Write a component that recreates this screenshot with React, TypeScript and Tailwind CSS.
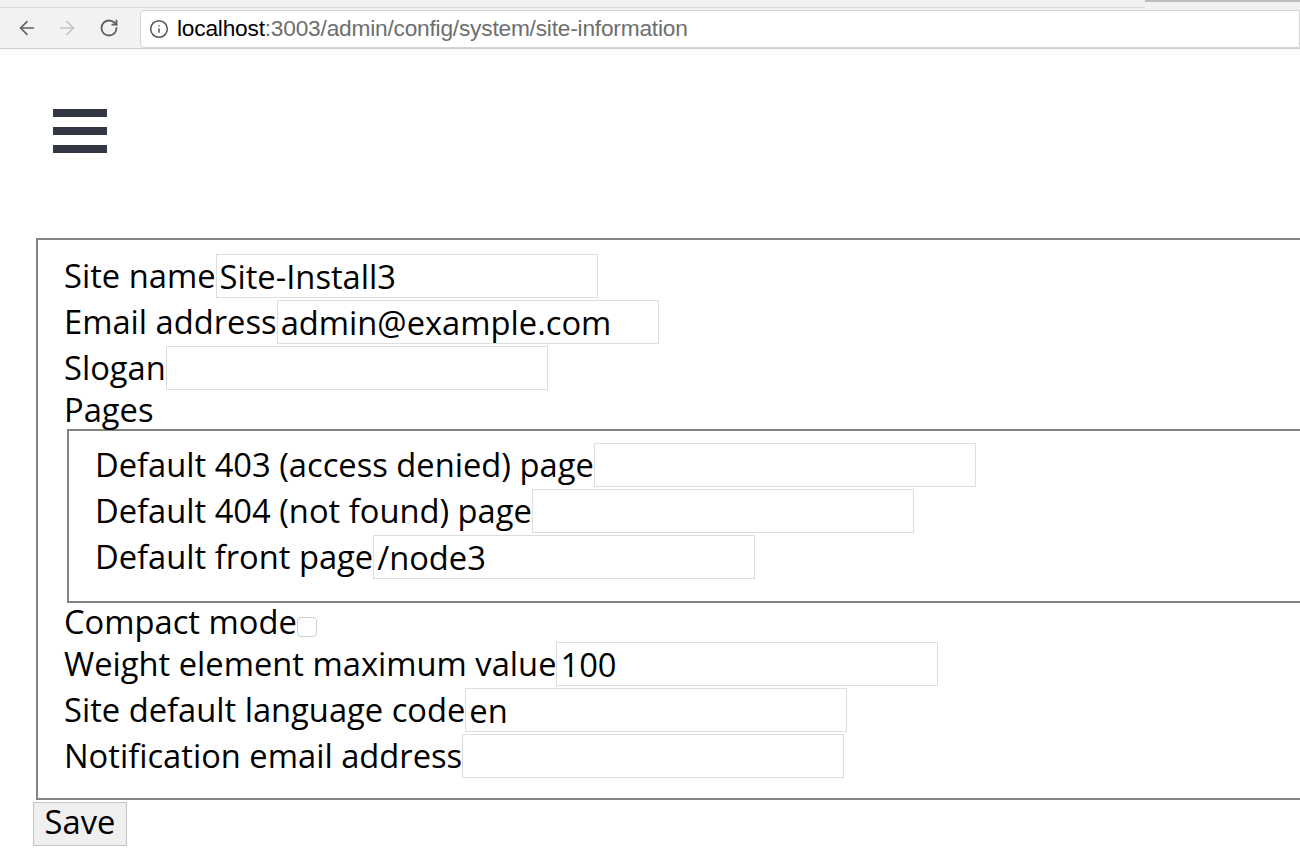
import React from 'react';
import { ArrowLeft, ArrowRight, RotateCw, Info } from 'lucide-react';

const Field: React.FC<{ label: string; value?: string }> = ({ label, value = '' }) => (
  <div className="flex items-center h-[46px] whitespace-nowrap">
    <label>{label}</label>
    <input
      type="text"
      defaultValue={value}
      className="w-[382px] h-[44px] border border-[#dedede] px-[3px] text-[32.7px] text-black outline-none bg-white"
    />
  </div>
);

const BrowserBar: React.FC = () => (
  <div className="w-full bg-[#f2f2f2]">
    <div className="h-[8px] flex">
      <div className="flex-1 border-b border-[#d9d9d9]" />
      <div className="w-[155px] border-t-2 border-[#bdbdbd]" />
    </div>
    <div className="h-[41px] flex items-center border-b border-[#cfcfcf]">
      <div className="flex items-center w-[140px] pl-[16px] gap-[18px]">
        <ArrowLeft className="w-[22px] h-[22px] text-[#5f5f5f]" strokeWidth={1.8} />
        <ArrowRight className="w-[22px] h-[22px] text-[#c4c4c4]" strokeWidth={1.8} />
        <RotateCw className="w-[20px] h-[20px] text-[#5f5f5f] ml-[3px]" strokeWidth={2.2} />
      </div>
      <div className="flex-1 h-[38px] mt-[1px] bg-white border border-[#d4d4d4] rounded-l-[4px] flex items-center pl-[8px] gap-[8px]">
        <Info className="w-[20px] h-[20px] text-[#555]" strokeWidth={1.8} />
        <span className="text-[22.7px] font-['Liberation_Sans',Arial,sans-serif] tracking-[-0.2px]">
          <span className="text-black">localhost</span>
          <span className="text-[#6e6e6e]">:3003/admin/config/system/site-information</span>
        </span>
      </div>
    </div>
    <div className="h-[6px] bg-[#fbfbfb]" />
  </div>
);

export default function App() {
  return (
    <div className="w-[1300px] h-[868px] overflow-hidden bg-white font-['Open_Sans',sans-serif] text-[32.7px] text-black leading-[1.25]">
      <BrowserBar />
      <div className="pl-[33px]">
        <div className="ml-[20px] mt-[54px] w-[54px] flex flex-col gap-[10px]">
          <div className="h-[8px] bg-[#333645]" />
          <div className="h-[8px] bg-[#333645]" />
          <div className="h-[8px] bg-[#333645]" />
        </div>
        <form className="mt-[85px]">
          <fieldset className="ml-[3px] w-[1400px] border-2 border-[#848484] pt-[13px] pb-[19px] pl-[26px]">
            <Field label="Site name" value="Site-Install3" />
            <Field label="Email address" value="admin@example.com" />
            <Field label="Slogan" />
            <div className="h-[38px] flex items-center">Pages</div>
            <fieldset className="ml-[3px] border-2 border-[#848484] pt-[11px] pb-[21px] pl-[26px]">
              <Field label="Default 403 (access denied) page" />
              <Field label="Default 404 (not found) page" />
              <Field label="Default front page" value="/node3" />
            </fieldset>
            <div className="h-[38px] flex items-center">
              <label>Compact mode</label>
              <input
                type="checkbox"
                className="appearance-none w-[20px] h-[20px] mt-[10px] border border-[#cfcfcf] rounded-[4px] bg-white"
              />
            </div>
            <Field label="Weight element maximum value" value="100" />
            <Field label="Site default language code" value="en" />
            <Field label="Notification email address" />
          </fieldset>
          <button
            type="button"
            className="mt-[2px] w-[94px] h-[44px] bg-[#efefef] border border-[#c4c4c4] text-[32.7px] leading-none pb-[4px]"
          >
            Save
          </button>
        </form>
      </div>
    </div>
  );
}
